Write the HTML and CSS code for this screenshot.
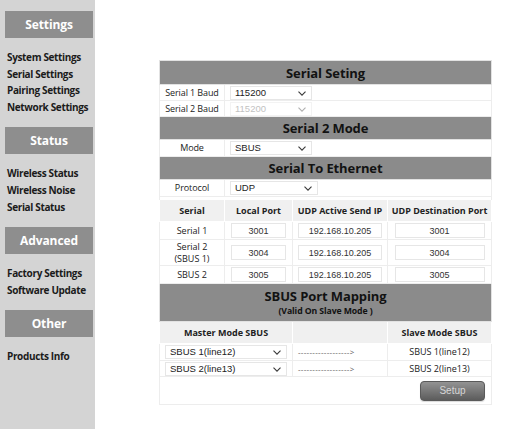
FILE: index.html
```html
<!DOCTYPE html>
<html>
<head>
<meta charset="utf-8">
<title>Serial Settings</title>
<link rel="stylesheet" href="styles.css">
</head>
<body>
<div class="page">
  <aside class="sidebar">
    <div class="side-head">Settings</div>
    <ul class="side-list">
      <li>System Settings</li>
      <li>Serial Settings</li>
      <li>Pairing Settings</li>
      <li>Network Settings</li>
    </ul>
    <div class="side-head">Status</div>
    <ul class="side-list">
      <li>Wireless Status</li>
      <li>Wireless Noise</li>
      <li>Serial Status</li>
    </ul>
    <div class="side-head">Advanced</div>
    <ul class="side-list">
      <li>Factory Settings</li>
      <li>Software Update</li>
    </ul>
    <div class="side-head">Other</div>
    <ul class="side-list">
      <li>Products Info</li>
    </ul>
  </aside>
  <main class="main">
    <table class="cfg">
      <colgroup>
        <col class="c1"><col class="c2"><col class="c3"><col class="c4">
      </colgroup>
      <tr class="sec"><th colspan="4">Serial Seting</th></tr>
      <tr class="r16">
        <td class="lbl">Serial 1 Baud</td>
        <td class="selcell" colspan="3"><span class="sel w82"><select><option>115200</option></select><svg class="chev" viewBox="0 0 8 5" width="8" height="5"><path d="M0.5 0.6 L4 4.2 L7.5 0.6" /></svg></span></td>
      </tr>
      <tr class="r16">
        <td class="lbl">Serial 2 Baud</td>
        <td class="selcell" colspan="3"><span class="sel w82 off"><select disabled><option>115200</option></select><svg class="chev" viewBox="0 0 8 5" width="8" height="5"><path d="M0.5 0.6 L4 4.2 L7.5 0.6" /></svg></span></td>
      </tr>
      <tr class="sec sec23"><th colspan="4">Serial 2 Mode</th></tr>
      <tr class="r17">
        <td class="lbl">Mode</td>
        <td class="selcell" colspan="3"><span class="sel w82"><select><option>SBUS</option></select><svg class="chev" viewBox="0 0 8 5" width="8" height="5"><path d="M0.5 0.6 L4 4.2 L7.5 0.6" /></svg></span></td>
      </tr>
      <tr class="sec sec23"><th colspan="4">Serial To Ethernet</th></tr>
      <tr class="r17">
        <td class="lbl">Protocol</td>
        <td class="selcell" colspan="3"><span class="sel w88"><select><option>UDP</option></select><svg class="chev" viewBox="0 0 8 5" width="8" height="5"><path d="M0.5 0.6 L4 4.2 L7.5 0.6" /></svg></span></td>
      </tr>
      <tr class="spacer"><td colspan="4"></td></tr>
      <tr class="colhead">
        <th>Serial</th>
        <th>Local Port</th>
        <th>UDP Active Send IP</th>
        <th>UDP Destination Port</th>
      </tr>
      <tr class="r18">
        <td>Serial 1</td>
        <td><input class="inp w55" value="3001"></td>
        <td><input class="inp w84" value="192.168.10.205"></td>
        <td><input class="inp w90" value="3001"></td>
      </tr>
      <tr class="r26">
        <td class="two"><div>Serial 2</div><div>(SBUS 1)</div></td>
        <td><input class="inp w55" value="3004"></td>
        <td><input class="inp w84" value="192.168.10.205"></td>
        <td><input class="inp w90" value="3004"></td>
      </tr>
      <tr class="r18">
        <td>SBUS 2</td>
        <td><input class="inp w55" value="3005"></td>
        <td><input class="inp w84" value="192.168.10.205"></td>
        <td><input class="inp w90" value="3005"></td>
      </tr>
      <tr class="sec maphead">
        <th colspan="4">
          <div class="map-title">SBUS Port Mapping</div>
          <div class="map-sub">(Valid On Slave Mode )</div>
        </th>
      </tr>
      <tr class="colhead r20">
        <th colspan="2">Master Mode SBUS</th>
        <th></th>
        <th>Slave Mode SBUS</th>
      </tr>
      <tr class="r17">
        <td class="selcell" colspan="2"><span class="sel w122"><select><option>SBUS 1(line12)</option></select><svg class="chev" viewBox="0 0 8 5" width="8" height="5"><path d="M0.5 0.6 L4 4.2 L7.5 0.6" /></svg></span></td>
        <td class="arrow">------------------&gt;</td>
        <td class="slave">SBUS 1(line12)</td>
      </tr>
      <tr class="r16">
        <td class="selcell" colspan="2"><span class="sel w122"><select><option>SBUS 2(line13)</option></select><svg class="chev" viewBox="0 0 8 5" width="8" height="5"><path d="M0.5 0.6 L4 4.2 L7.5 0.6" /></svg></span></td>
        <td class="arrow">------------------&gt;</td>
        <td class="slave">SBUS 2(line13)</td>
      </tr>
      <tr class="btnrow">
        <td colspan="4"><button class="setup" type="button">Setup</button></td>
      </tr>
    </table>
  </main>
</div>
</body>
</html>
```

FILE: styles.css
```css
html, body {
  margin: 0;
  padding: 0;
  background: #ffffff;
}

body {
  font-family: "Open Sans", "Noto Sans", sans-serif;
  color: #222222;
}

.page {
  display: flex;
  min-height: 429px;
}

/* ---------- sidebar ---------- */
.sidebar {
  width: 95px;
  flex: none;
  background: #d4d4d4;
  padding-top: 11px;
  box-sizing: border-box;
}

.side-head {
  margin: 0 2px 0 5px;
  height: 27px;
  background: #8e8e8e;
  color: #ffffff;
  font-weight: 700;
  font-size: 12px;
  letter-spacing: -0.1px;
  display: flex;
  align-items: center;
  justify-content: center;
}

.side-list {
  list-style: none;
  margin: 0;
  padding: 11px 0 11.5px 7px;
}

.side-list li {
  font-size: 10px;
  font-weight: 700;
  line-height: 16.7px;
  letter-spacing: -0.35px;
  color: #1b1b1b;
  white-space: nowrap;
}

/* ---------- main table ---------- */
.main {
  padding: 60px 0 0 64px;
}

.cfg {
  border-collapse: collapse;
  table-layout: fixed;
  width: 332px;
  border: 1px solid #e4e4e4;
}

.c1 { width: 65px; }
.c2 { width: 68px; }
.c3 { width: 95px; }
.c4 { width: 104px; }

.cfg td,
.cfg th {
  padding: 0;
  border: 1px solid #ededed;
  font-size: 9px;
  line-height: 10px;
  color: #222222;
  text-align: center;
  vertical-align: middle;
  white-space: nowrap;
}

.sec th {
  background: #8b8b8b;
  border-color: #e2e2e2;
  color: #121212;
  font-size: 13px;
  font-weight: 700;
  height: 23px;
  letter-spacing: -0.1px;
}

.sec23 th { height: 22px; }

.r16 td { height: 15px; }
.r17 td { height: 16px; }
.r18 td { height: 17px; }
.r20 th { height: 19px; }
.r26 td { height: 25px; }

.spacer td {
  height: 2px;
  border-top: 1px solid #ededed;
  border-bottom: none;
}

.colhead th {
  background: #f0f0f0;
  border-color: #ffffff;
  font-weight: 700;
  height: 21px;
}

.lbl {
  letter-spacing: -0.1px;
}

.selcell {
  text-align: left !important;
  padding-left: 5px !important;
}

/* select with chevron */
.sel {
  position: relative;
  display: inline-block;
  vertical-align: middle;
  height: 14px;
}

.sel select {
  appearance: none;
  -webkit-appearance: none;
  width: 100%;
  height: 14px;
  margin: 0;
  padding: 0 0 0 4px;
  border: 1px solid #e6e6e6;
  border-radius: 0;
  background: #ffffff;
  font-family: "Liberation Sans", Arial, sans-serif;
  font-size: 9.5px;
  line-height: 12px;
  color: #222222;
  box-sizing: border-box;
  display: block;
}

.sel .chev {
  position: absolute;
  right: 6px;
  top: 5px;
  fill: none;
  stroke: #3a3a3a;
  stroke-width: 1.1;
}

.sel.off select {
  color: #a8a8a8;
  border-color: #efefef;
}

.sel.off .chev {
  stroke: #b0b0b0;
}

.w82 { width: 82px; }
.w88 { width: 88px; }
.w122 { width: 122px; }

/* inputs */
.inp {
  height: 15px;
  margin: 0;
  padding: 0;
  border: 1px solid #e6e6e6;
  background: #ffffff;
  font-family: "Liberation Sans", Arial, sans-serif;
  font-size: 9px;
  color: #333333;
  text-align: center;
  box-sizing: border-box;
  vertical-align: middle;
}

.w55 { width: 55px; }
.w84 { width: 84px; }
.w90 { width: 90px; }

.two div {
  line-height: 12px;
}

/* mapping */
.maphead th {
  height: 37px;
}

.map-title {
  font-size: 13px;
  line-height: 16px;
}

.map-sub {
  font-size: 8.7px;
  line-height: 12px;
  margin-top: 1px;
}

.arrow {
  text-align: left !important;
  padding-left: 5px !important;
  color: #555555 !important;
  font-size: 8px !important;
  letter-spacing: 0.3px;
}

.slave {
  font-size: 9px;
}

.btnrow td {
  height: 27px;
  text-align: right;
  padding-right: 6px;
}

.setup {
  width: 65px;
  height: 20px;
  margin: 0;
  padding: 0;
  border: 1px solid #5a5a5a;
  border-radius: 4px;
  background: linear-gradient(#939393, #5c5c5c);
  color: #d6d6d6;
  font-family: "Liberation Sans", Arial, sans-serif;
  font-size: 10px;
  vertical-align: middle;
  box-shadow: 0 1px 1px rgba(0, 0, 0, 0.15);
}
```
